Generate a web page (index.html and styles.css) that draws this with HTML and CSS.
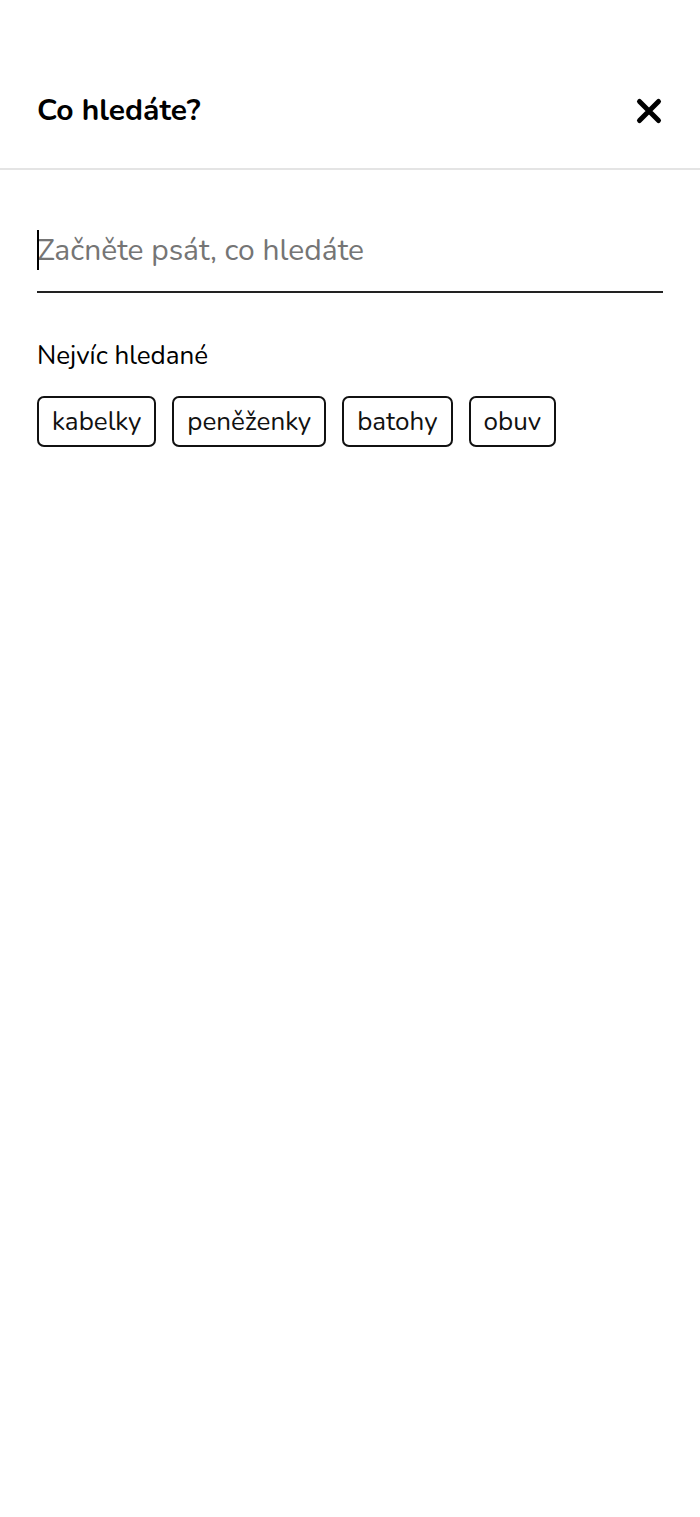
FILE: index.html
```html
<!DOCTYPE html>
<html lang="cs">
<head>
<meta charset="utf-8">
<meta name="viewport" content="width=device-width, initial-scale=1">
<title>Co hledáte?</title>
<link rel="stylesheet" href="styles.css">
</head>
<body>
<header class="header">
  <h1 class="title">Co hledáte?</h1>
  <button class="close" type="button" aria-label="Zavřít">
    <svg class="close-icon" viewBox="0 0 28 28" aria-hidden="true"><path d="M4.5 4.5 23.5 23.5M23.5 4.5 4.5 23.5"/></svg>
  </button>
</header>
<main class="content">
  <form class="search" role="search">
    <input class="search-input" type="search" aria-label="Co hledáte?" placeholder="Začněte psát, co hledáte">
    <span class="caret" aria-hidden="true"></span>
  </form>
  <h2 class="subtitle">Nejvíc hledané</h2>
  <nav class="tags" aria-label="Nejvíc hledané">
    <a class="tag" href="#kabelky">kabelky</a>
    <a class="tag" href="#penezenky">peněženky</a>
    <a class="tag" href="#batohy">batohy</a>
    <a class="tag" href="#obuv">obuv</a>
  </nav>
</main>
</body>
</html>
```
FILE: styles.css
```css
* {
  box-sizing: border-box;
}

body {
  margin: 0;
  background: #fff;
  color: #000;
  font-family: Nunito, Lato, sans-serif;
}

.header {
  display: flex;
  align-items: center;
  justify-content: space-between;
  padding: 91px 37px 37px;
  border-bottom: 2px solid #e4e4e4;
}

.title {
  margin: 0;
  font-size: 30px;
  font-weight: 700;
  line-height: 40px;
}

.close {
  display: flex;
  padding: 0;
  border: 0;
  background: none;
  cursor: pointer;
}

.close-icon {
  width: 28px;
  height: 28px;
  fill: none;
  stroke: #000;
  stroke-width: 5;
  stroke-linecap: round;
}

.content {
  padding: 60px 37px;
}

.search {
  position: relative;
  border-bottom: 2px solid #222;
}

.search-input {
  display: block;
  width: 100%;
  height: 61px;
  padding: 0 0 21px;
  border: 0;
  outline: 0;
  background: none;
  color: #000;
  font: inherit;
  font-size: 30px;
  line-height: 40px;
  appearance: none;
}

.search-input::placeholder {
  color: #757575;
  opacity: 1;
}

.caret {
  position: absolute;
  top: 0;
  left: 0;
  width: 2px;
  height: 40px;
  background: #000;
}

.subtitle {
  margin: 45px 0 23px;
  font-size: 26px;
  font-weight: 400;
  line-height: 35px;
}

.tags {
  display: flex;
  flex-wrap: wrap;
  gap: 16px;
}

.tag {
  padding: 6px 13px;
  border: 2px solid #111;
  border-radius: 7px;
  color: #111;
  font-size: 26px;
  line-height: 35px;
  text-decoration: none;
}
```
